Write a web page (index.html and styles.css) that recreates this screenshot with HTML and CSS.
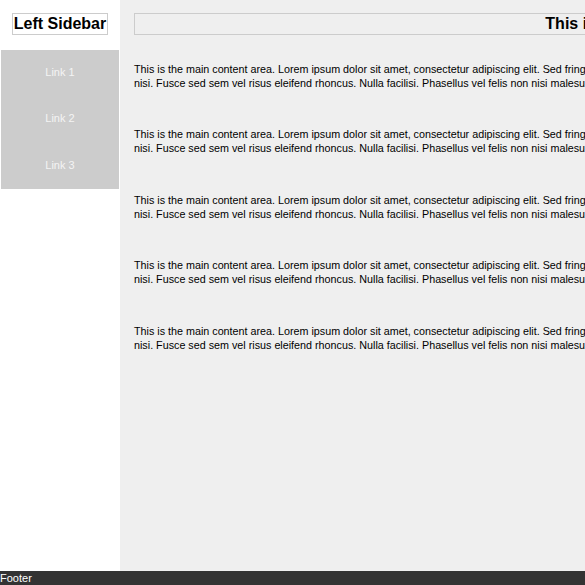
FILE: index.html
```html
<!DOCTYPE html>
<html>
<head>
<meta charset="utf-8">
<title>Layout</title>
<link rel="stylesheet" href="styles.css">
</head>
<body>
<div class="page">
  <aside class="sidebar">
    <h2 class="side-title">Left Sidebar</h2>
    <ul class="links">
      <li><a href="#">Link 1</a></li>
      <li><a href="#">Link 2</a></li>
      <li><a href="#">Link 3</a></li>
    </ul>
  </aside>
  <main class="main">
    <h1 class="main-title">This is the Main Content Area</h1>
    <div class="paras">
      <p>This is the main content area. Lorem ipsum dolor sit amet, consectetur adipiscing elit. Sed fringilla, mauris ut dictum posuere, lacus est ullamcorper<br>nisi. Fusce sed sem vel risus eleifend rhoncus. Nulla facilisi. Phasellus vel felis non nisi malesuada lacinia.</p>
      <p>This is the main content area. Lorem ipsum dolor sit amet, consectetur adipiscing elit. Sed fringilla, mauris ut dictum posuere, lacus est ullamcorper<br>nisi. Fusce sed sem vel risus eleifend rhoncus. Nulla facilisi. Phasellus vel felis non nisi malesuada lacinia.</p>
      <p>This is the main content area. Lorem ipsum dolor sit amet, consectetur adipiscing elit. Sed fringilla, mauris ut dictum posuere, lacus est ullamcorper<br>nisi. Fusce sed sem vel risus eleifend rhoncus. Nulla facilisi. Phasellus vel felis non nisi malesuada lacinia.</p>
      <p>This is the main content area. Lorem ipsum dolor sit amet, consectetur adipiscing elit. Sed fringilla, mauris ut dictum posuere, lacus est ullamcorper<br>nisi. Fusce sed sem vel risus eleifend rhoncus. Nulla facilisi. Phasellus vel felis non nisi malesuada lacinia.</p>
      <p>This is the main content area. Lorem ipsum dolor sit amet, consectetur adipiscing elit. Sed fringilla, mauris ut dictum posuere, lacus est ullamcorper<br>nisi. Fusce sed sem vel risus eleifend rhoncus. Nulla facilisi. Phasellus vel felis non nisi malesuada lacinia.</p>
    </div>
  </main>
</div>
<footer class="footer">Footer</footer>
</body>
</html>
```

FILE: styles.css
```css
html, body {
  margin: 0;
  padding: 0;
  overflow: hidden;
  width: 585px;
  height: 585px;
}
body {
  font-family: "Liberation Sans", Arial, sans-serif;
  color: #000;
  background: #fff;
}
.page {
  display: flex;
  height: 571px;
  width: 1300px;
}
.sidebar {
  flex: none;
  width: 120px;
  background: #fff;
  display: flex;
  flex-direction: column;
  align-items: center;
  padding-top: 13px;
  box-sizing: border-box;
}
.side-title {
  margin: 0;
  font-size: 16px;
  font-weight: bold;
  line-height: 20px;
  border: 1px solid #ccc;
  padding: 0 1px;
}
.links {
  list-style: none;
  margin: 15px 0 0 0;
  padding: 0;
  width: 118px;
  background: #ccc;
}
.links li {
  height: 46.4px;
  line-height: 44px;
  text-align: center;
  font-size: 11px;
}
.links a {
  color: #f4f4f4;
  text-decoration: none;
}
.main {
  flex: none;
  width: 1075px;
  background: #efefef;
  padding: 13px 14px;
  box-sizing: border-box;
}
.main-title {
  margin: 0;
  font-size: 16px;
  font-weight: bold;
  line-height: 20px;
  text-align: center;
  border: 1px solid #ccc;
}
.paras {
  display: flex;
  flex-direction: column;
  gap: 37.4px;
  margin-top: 27px;
}
.paras p {
  margin: 0;
  font-size: 10.75px;
  line-height: 14px;
  white-space: nowrap;
}
.footer {
  height: 14px;
  background: #333;
  color: #fff;
  font-size: 11px;
  line-height: 14px;
}
```
